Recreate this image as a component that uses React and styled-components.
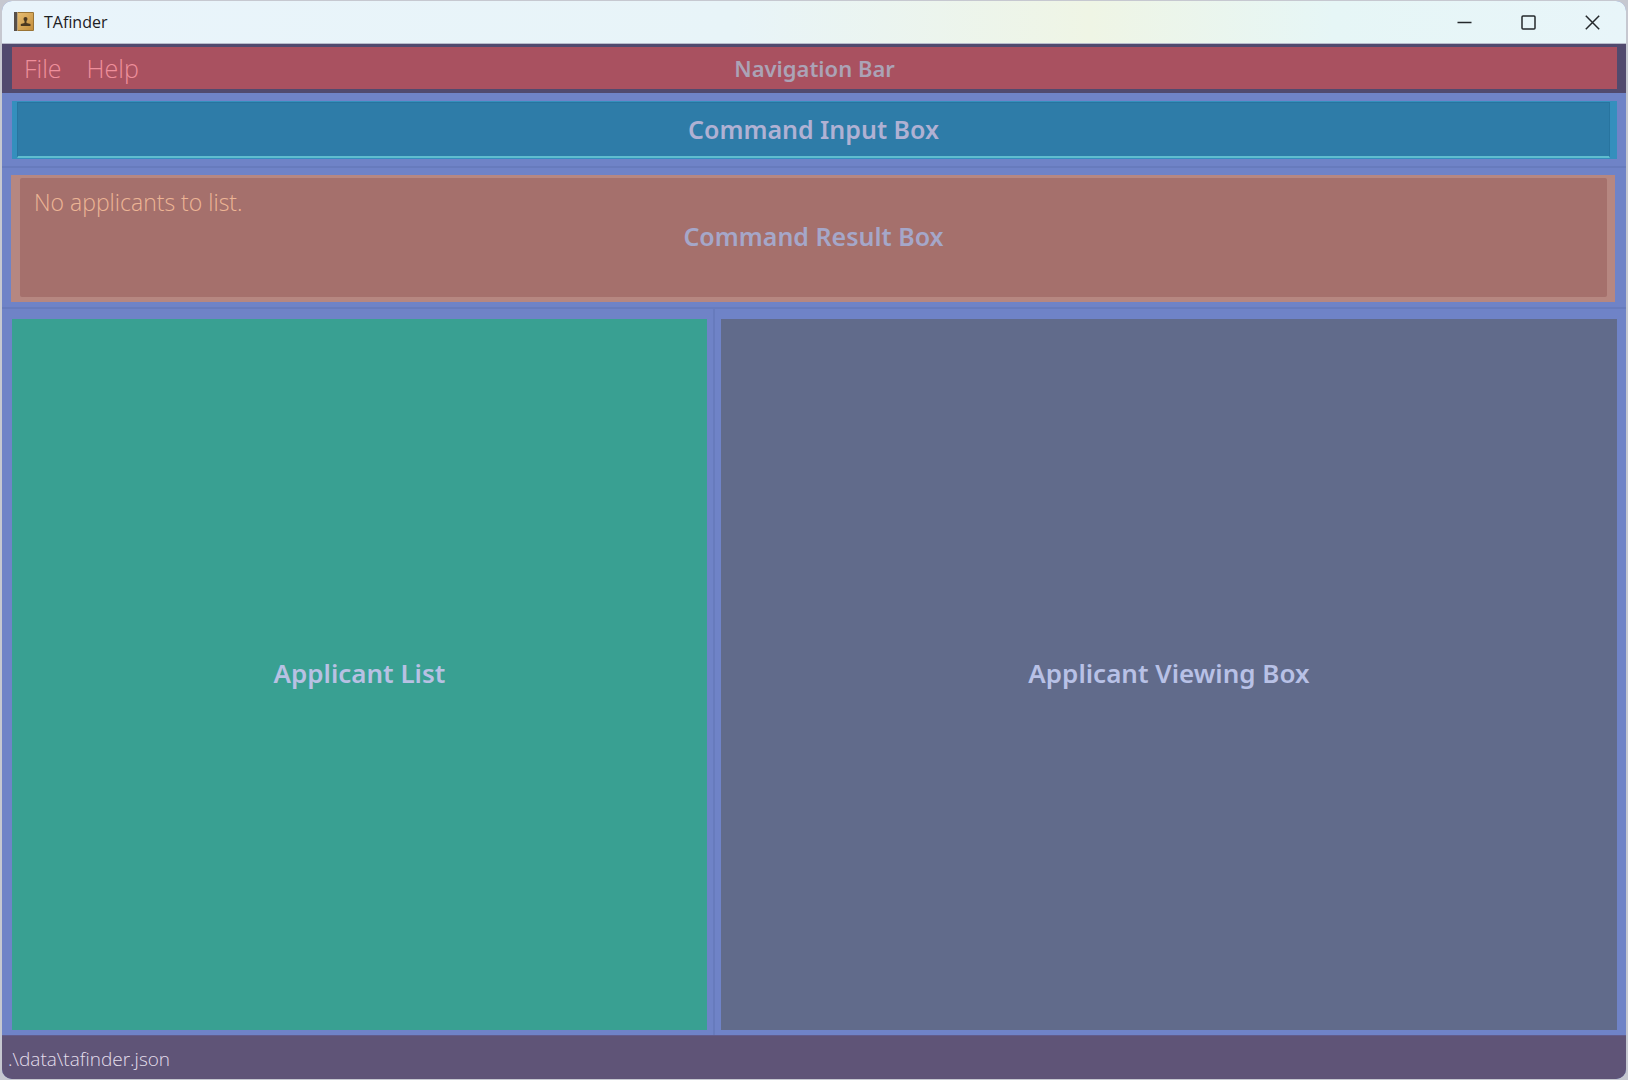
import React, { useState } from "react";
import styled, { createGlobalStyle } from "styled-components";

const GlobalStyle = createGlobalStyle`
  *, *::before, *::after { box-sizing: border-box; }
  body { margin: 0; background: #c6c8d0; }
  button, input { font: inherit; color: inherit; }
`;

const thinFont = `"Open Sans", "Noto Sans", sans-serif`;
const labelFont = `"Noto Sans", "Open Sans", sans-serif`;

const Desktop = styled.div`
  min-height: 100vh;
  padding: 1px 2px;
  display: flex;
`;

const Window = styled.div`
  flex: 1;
  display: flex;
  flex-direction: column;
  border-radius: 10px;
  overflow: hidden;
  background: #6f83c7;
  font-family: ${thinFont};
`;

const TitleBar = styled.header`
  height: 43px;
  flex: none;
  display: flex;
  align-items: center;
  justify-content: space-between;
  padding: 0 2px 0 12px;
  background: linear-gradient(90deg, #e9f4fb 0%, #e8f4f8 45%, #eff5e5 67%, #e6f6f6 82%, #e8f5f9 100%);
  border-bottom: 1px solid #b9bccb;
`;

const AppName = styled.div`
  display: flex;
  align-items: center;
  gap: 10px;
  font-size: 16px;
  line-height: 24px;
  color: #1d2023;
`;

const WindowButtons = styled.div`
  display: flex;
`;

const WindowButton = styled.button`
  width: 64px;
  height: 40px;
  padding: 0;
  border: 0;
  background: none;
  color: #24282b;
  display: grid;
  place-items: center;
`;

const NavFrame = styled.nav`
  flex: none;
  padding: 3px 9px 4px 10px;
  background: #514a6e;
`;

const Stack = styled.div`
  display: grid;
  grid-template-columns: 1fr;

  > * { grid-area: 1 / 1; }
`;

const NavBar = styled(Stack)`
  height: 42px;
  padding-bottom: 1px;
  background: #a95160;
  align-items: center;
`;

const Menus = styled.div`
  display: flex;
  gap: 25px;
  padding-left: 12px;
`;

const MenuButton = styled.button`
  padding: 0;
  border: 0;
  background: none;
  font-size: 25px;
  font-weight: 300;
  line-height: 36px;
  color: #ef8f9b;
`;

const labelSizes = { small: 22, medium: 25, large: 26 };

const RegionLabel = styled.span`
  place-self: center;
  padding-bottom: ${(p) => (p.$size === "small" ? 0 : 3)}px;
  pointer-events: none;
  font-family: ${labelFont};
  font-size: ${(p) => labelSizes[p.$size || "medium"]}px;
  font-weight: 600;
  line-height: 32px;
  color: ${(p) => p.$color};
`;

const CommandSection = styled.section`
  flex: none;
  padding: 8px 9px 7px 10px;
  border-bottom: 2px solid #677bbd;
`;

const CommandFrame = styled(Stack)`
  height: 58px;
  padding: 1px 7px 1px 5px;
  background: #348fbd;
`;

const CommandInput = styled.input`
  width: 100%;
  height: 100%;
  padding: 0 16px;
  border: 1px solid #28749f;
  border-bottom: 2px solid #5fbdcf;
  border-radius: 0;
  outline: 0;
  background: #2e7ca8;
  font-size: 23px;
  font-weight: 300;
`;

const ResultSection = styled.section`
  flex: none;
  padding: 7px 11px 5px 9px;
  border-bottom: 2px solid #677bbd;
`;

const ResultFrame = styled.div`
  padding: 3px 8px 5px 9px;
  background: #b68781;
`;

const ResultBox = styled(Stack)`
  height: 119px;
  background: #a5706c;
  border-radius: 2px;
`;

const ResultText = styled.output`
  padding: 8px 14px;
  font-size: 23px;
  font-weight: 300;
  line-height: 32px;
  color: #edb595;
`;

const Panels = styled.main`
  flex: 1;
  display: grid;
  grid-template-columns: 710fr 912fr;
`;

const PanelSlot = styled.section`
  display: grid;
  padding: ${(p) => (p.$first ? "10px 6px 5px 10px" : "10px 9px 5px 6px")};
  border-left: ${(p) => (p.$first ? 0 : 2)}px solid #677bbd;
`;

const Panel = styled.div`
  display: grid;
  background: ${(p) => p.$fill};
`;

const StatusBar = styled.footer`
  flex: none;
  height: 44px;
  padding: 7px 6px;
  background: #5f5477;
  border-top: 1px solid #625c8c;
  font-size: 19px;
  font-weight: 300;
  line-height: 32px;
  color: #e4dfec;
`;

function AddressBookIcon() {
  return (
    <svg width="20" height="20" viewBox="0 0 20 20" aria-hidden="true">
      <defs>
        <linearGradient id="cover" x1="0" y1="0" x2="1" y2="1">
          <stop offset="0" stopColor="#e6bd72" />
          <stop offset="1" stopColor="#c48e3c" />
        </linearGradient>
      </defs>
      <rect x="0" y="0" width="20" height="19" rx="1" fill="#9a7435" />
      <rect x="4" y="1" width="15" height="17" fill="url(#cover)" />
      <rect x="0" y="0" width="3" height="19" fill="#57504a" />
      <rect x="3" y="0" width="1" height="19" fill="#b9a078" />
      <circle cx="11.5" cy="7" r="2" fill="#4b3820" />
      <path d="M10.500 8h2v3l4 1v2H6.800v-2l3.700-1z" fill="#4b3820" />
    </svg>
  );
}

const glyphs = {
  Minimize: <path d="M0.500 7.500h14" />,
  Maximize: <rect x="1" y="1" width="13" height="13" rx="1" />,
  Close: <path d="M0.800 0.800l13.400 13.400M14.200 0.800L0.800 14.200" />,
};

function WindowGlyph({ name }) {
  return (
    <svg width="15" height="15" viewBox="0 0 15 15" fill="none" stroke="currentColor" strokeWidth="1.5" aria-hidden="true">
      {glyphs[name]}
    </svg>
  );
}

export default function App() {
  const [command, setCommand] = useState("");

  return (
    <Desktop>
      <GlobalStyle />
      <Window>
        <TitleBar>
          <AppName>
            <AddressBookIcon />
            TAfinder
          </AppName>
          <WindowButtons>
            {Object.keys(glyphs).map((name) => (
              <WindowButton key={name} type="button" aria-label={name}>
                <WindowGlyph name={name} />
              </WindowButton>
            ))}
          </WindowButtons>
        </TitleBar>

        <NavFrame>
          <NavBar>
            <Menus>
              <MenuButton type="button">File</MenuButton>
              <MenuButton type="button">Help</MenuButton>
            </Menus>
            <RegionLabel $size="small" $color="#aba3b6">Navigation Bar</RegionLabel>
          </NavBar>
        </NavFrame>

        <CommandSection>
          <CommandFrame>
            <CommandInput
              id="command"
              type="text"
              autoComplete="off"
              value={command}
              onChange={(e) => setCommand(e.target.value)}
            />
            <RegionLabel as="label" htmlFor="command" $color="#b0b1d3">Command Input Box</RegionLabel>
          </CommandFrame>
        </CommandSection>

        <ResultSection>
          <ResultFrame>
            <ResultBox>
              <ResultText>No applicants to list.</ResultText>
              <RegionLabel $color="#a5a7c9">Command Result Box</RegionLabel>
            </ResultBox>
          </ResultFrame>
        </ResultSection>

        <Panels>
          <PanelSlot $first>
            <Panel $fill="#39a092">
              <RegionLabel $size="large" $color="#b8c1e3">Applicant List</RegionLabel>
            </Panel>
          </PanelSlot>
          <PanelSlot>
            <Panel $fill="#616b8b">
              <RegionLabel $size="large" $color="#b8c1e6">Applicant Viewing Box</RegionLabel>
            </Panel>
          </PanelSlot>
        </Panels>

        <StatusBar>.\data\tafinder.json</StatusBar>
      </Window>
    </Desktop>
  );
}
